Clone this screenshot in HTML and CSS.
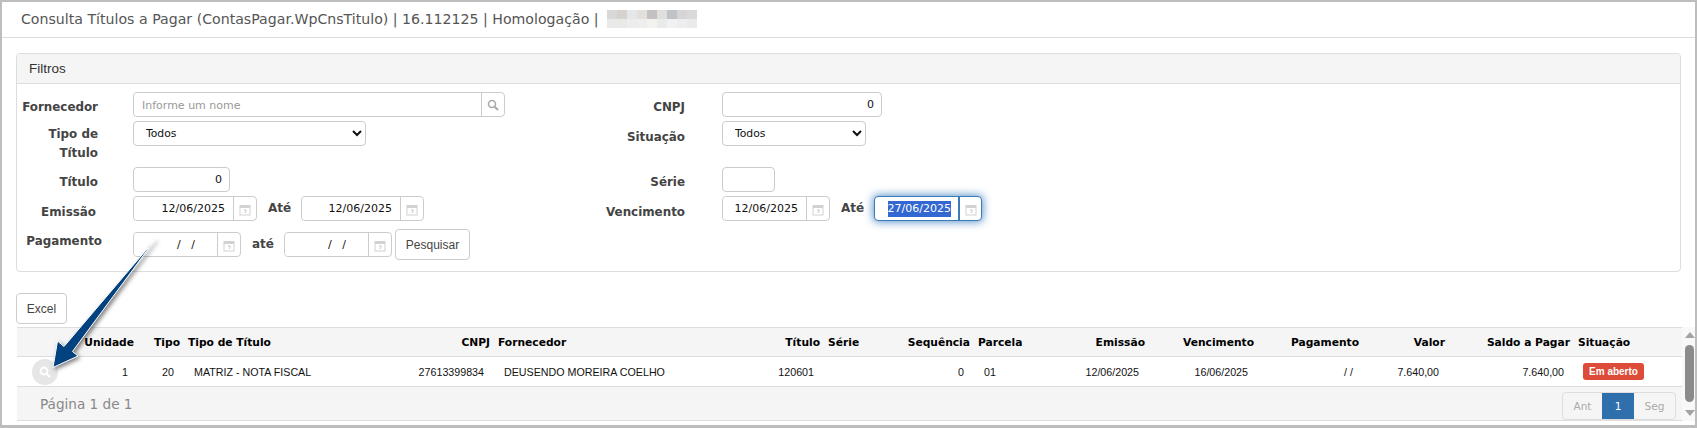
FILE: index.html
```html
<!DOCTYPE html>
<html lang="pt-BR">
<head>
<meta charset="utf-8">
<title>Consulta Títulos a Pagar</title>
<link rel="stylesheet" href="styles.css">
</head>
<body>
<div class="frame">
  <header class="page-title">
    <span>Consulta Títulos a Pagar (ContasPagar.WpCnsTitulo) | 16.112125 | Homologação |</span>
    <div class="blur">
      <i class="b1"></i><i class="b2"></i><i class="b3"></i><i class="b4"></i><i class="b5"></i><i class="b6"></i><i class="b7"></i><i class="b8"></i><i class="b9"></i>
      <i class="c1"></i><i class="c2"></i><i class="c3"></i><i class="c4"></i><i class="c5"></i><i class="c6"></i><i class="c7"></i><i class="c8"></i><i class="c9"></i>
    </div>
  </header>

  <section class="panel">
    <div class="panel-head">Filtros</div>
    <div class="form">
      <div class="field left">
        <label class="lbl">Fornecedor</label>
        <div class="group w-372">
          <input class="in grow ph" placeholder="Informe um nome">
          <span class="addon"><svg width="12" height="12" viewBox="0 0 12 12"><circle cx="5" cy="5" r="3.5" fill="none" stroke="#aaa" stroke-width="1.6"/><path d="M7.7 7.7 11 11" stroke="#aaa" stroke-width="2"/></svg></span>
        </div>
      </div>
      <div class="field right">
        <label class="lbl">CNPJ</label>
        <input class="in solo num w-160" value="0">
      </div>

      <div class="field left">
        <label class="lbl lbl-two">Tipo de<br>Título</label>
        <select class="sel w-233"><option>Todos</option></select>
      </div>
      <div class="field right">
        <label class="lbl l8">Situação</label>
        <select class="sel w-144"><option>Todos</option></select>
      </div>

      <div class="field left">
        <label class="lbl">Título</label>
        <input class="in solo num w-97" value="0">
      </div>
      <div class="field right">
        <label class="lbl">Série</label>
        <input class="in solo w-53">
      </div>

      <div class="field left">
        <label class="lbl l8 end2">Emissão</label>
        <div class="group w-124"><input class="in grow num" value="12/06/2025"><span class="addon"><svg class="cal" viewBox="0 0 12 12"><use href="#cal"/></svg></span></div>
        <span class="ate ate-a">Até</span>
        <div class="group w-123"><input class="in grow num" value="12/06/2025"><span class="addon"><svg class="cal" viewBox="0 0 12 12"><use href="#cal"/></svg></span></div>
      </div>
      <div class="field right">
        <label class="lbl l8">Vencimento</label>
        <div class="group w-108"><input class="in grow num" value="12/06/2025"><span class="addon"><svg class="cal" viewBox="0 0 12 12"><use href="#cal"/></svg></span></div>
        <span class="ate ate-b">Até</span>
        <div class="group w-108 focus"><span class="selected-wrap"><span class="selected">27/06/2025</span></span><span class="addon"><svg class="cal" viewBox="0 0 12 12"><use href="#cal"/></svg></span></div>
      </div>

      <div class="field left center">
        <label class="lbl l-pag">Pagamento</label>
        <div class="group w-108"><input class="in grow slash" value="/   /"><span class="addon"><svg class="cal" viewBox="0 0 12 12"><use href="#cal"/></svg></span></div>
        <span class="ate ate-c">até</span>
        <div class="group w-108"><input class="in grow slash" value="/   /"><span class="addon"><svg class="cal" viewBox="0 0 12 12"><use href="#cal"/></svg></span></div>
        <button class="btn btn-search">Pesquisar</button>
      </div>
    </div>
  </section>

  <section class="results">
    <button class="btn btn-excel">Excel</button>
    <div class="grid-wrap">
      <div class="grid-main">
        <table class="grid">
          <colgroup>
            <col class="c-a"><col class="c-b"><col class="c-c"><col class="c-d"><col class="c-e"><col class="c-f"><col class="c-g"><col class="c-h"><col class="c-i"><col class="c-j"><col class="c-k"><col class="c-l"><col class="c-m"><col class="c-n"><col class="c-o"><col class="c-p">
          </colgroup>
          <thead>
            <tr>
              <th></th><th class="r">Unidade</th><th class="r">Tipo</th><th>Tipo de Título</th><th class="r">CNPJ</th><th>Fornecedor</th><th class="r">Título</th><th>Série</th><th class="r">Sequência</th><th>Parcela</th><th class="r">Emissão</th><th class="r">Vencimento</th><th class="r">Pagamento</th><th class="r">Valor</th><th class="r">Saldo a Pagar</th><th>Situação</th>
            </tr>
          </thead>
          <tbody>
            <tr>
              <td class="act"><span class="circle"><svg width="12" height="12" viewBox="0 0 12 12"><circle cx="5" cy="5" r="3.5" fill="none" stroke="#fff" stroke-width="1.8"/><path d="M7.7 7.7 11 11" stroke="#fff" stroke-width="2.2"/></svg></span></td>
              <td class="r">1</td><td class="r">20</td><td>MATRIZ - NOTA FISCAL</td><td class="r">27613399834</td><td>DEUSENDO MOREIRA COELHO</td><td class="r">120601</td><td></td><td class="r">0</td><td>01</td><td class="r">12/06/2025</td><td class="r">16/06/2025</td><td class="r">/ /</td><td class="r">7.640,00</td><td class="r">7.640,00</td><td class="sit"><span class="badge">Em aberto</span></td>
            </tr>
          </tbody>
        </table>
        <div class="grid-foot">
          <span class="pageinfo">Página 1 de 1</span>
          <div class="pager"><span class="pg p-ant">Ant</span><span class="pg p-cur">1</span><span class="pg p-seg">Seg</span></div>
        </div>
      </div>
      <div class="scroll">
        <svg class="sc-arrow" width="10" height="6" viewBox="0 0 10 6"><path d="M5 0 10 6H0z" fill="#a3a3a3"/></svg>
        <div class="thumb"></div>
        <svg class="sc-arrow" width="10" height="6" viewBox="0 0 10 6"><path d="M0 0H10L5 6z" fill="#a3a3a3"/></svg>
      </div>
    </div>
  </section>
</div>

<svg class="defs" width="0" height="0"><defs>
  <g id="cal"><rect x="1" y="1.5" width="10" height="9.5" fill="#fff" stroke="#d2d2d2"/><rect x="1" y="1.5" width="10" height="2.5" fill="#d2d2d2"/><path d="M5 6h2v1.5L6 9" fill="none" stroke="#c4c4c4"/></g>
</defs></svg>

<svg class="arrow" width="1697" height="428" viewBox="0 0 1697 428">
  <polygon points="155.5,239 72.5,351.5 78,356 53,367.5 57.5,341 64,346.5" fill="#02427f" stroke="#fff" stroke-width="1"/>
</svg>
</body>
</html>
```

FILE: styles.css
```css
* { box-sizing: border-box; }
html, body { margin: 0; padding: 0; }
body { position: relative; width: 1697px; height: 428px; overflow: hidden; background: #fff; font-family: "DejaVu Sans", Verdana, sans-serif; color: #444; }

.frame { width: 1697px; height: 428px; border: 2px solid #bdbdbd; border-bottom-width: 3px; overflow: hidden; }

.page-title { height: 36px; border-bottom: 1px solid #ddd; padding-left: 19px; display: flex; align-items: center; gap: 8px; font-size: 14.15px; color: #555; padding-bottom: 1px; }
.blur { display: grid; grid-template-columns: repeat(9, 10px); grid-template-rows: 9px 9px; }
.b1 { background: #d8d8d8; } .b2 { background: #d5d2d0; } .b3 { background: #e4e6ea; } .b4 { background: #e2dfdc; } .b5 { background: #c3c0c2; } .b6 { background: #dfdfdd; } .b7 { background: #bfc3c8; } .b8 { background: #d5d5d8; } .b9 { background: #d9d9d7; }
.c1 { background: #e9e9e9; } .c2 { background: #e9e9e8; } .c3 { background: #ededee; } .c4 { background: #edefee; } .c5 { background: #f3f2ef; } .c6 { background: #e9eaea; } .c7 { background: #f0f1f3; } .c8 { background: #eeeeef; } .c9 { background: #eaeaea; }

.panel { margin: 15px 14px 0; height: 219px; border: 1px solid #ddd; border-radius: 4px; }
.panel-head { height: 30px; padding-left: 12px; background: #f5f5f5; border-bottom: 1px solid #ddd; border-radius: 4px 4px 0 0; font: 13.5px/29px "Liberation Sans", Arial, sans-serif; color: #333; }

.form { display: grid; grid-template-columns: 560px 1fr; grid-template-rows: 25px 42px 25px 25px 31px; row-gap: 4px; padding-top: 8px; }
.form > .field:nth-child(9) { grid-column: 1 / -1; margin-top: 4px; }
.field { display: flex; align-items: flex-start; }
.field.center { align-items: center; height: 31px; }
.field.left .lbl { width: 81px; margin-right: 35px; }
.field.right .lbl { width: 108px; margin-right: 37px; }
.lbl { font-size: 11.9px; font-weight: 700; line-height: 16px; text-align: right; padding-top: 7px; color: #444; flex: none; }
.lbl-two { line-height: 19px; padding-top: 4px; }
.l8 { padding-top: 8px; }
.end2 { padding-right: 2px; }
.field.left .l-pag { padding: 0 0 8px; width: 85px; margin-right: 31px; white-space: nowrap; }

.in { height: 25px; border: 0; outline: 0; background: #fff; font: 11px "DejaVu Sans", Verdana, sans-serif; color: #111; padding: 0 8px; min-width: 0; border-radius: 4px; }
.in::placeholder { color: #999; }
.solo { border: 1px solid #ccc; }
.num { text-align: right; }
.grow { flex: 1; height: 23px; }
.ph { padding-top: 1px; }
.slash { text-align: right; padding-right: 22px; }
.solo.num { padding-right: 7px; }

.group { display: flex; height: 25px; border: 1px solid #ccc; border-radius: 4px; background: #fff; flex: none; }
.addon { width: 23px; flex: none; border-left: 1px solid #ccc; display: flex; align-items: center; justify-content: center; }
.cal { width: 12px; height: 12px; margin-top: 2px; }

.w-372 { width: 372px; }
.w-160 { width: 160px; }
.w-233 { width: 233px; }
.w-144 { width: 144px; }
.w-97 { width: 97px; }
.w-53 { width: 53px; }
.w-124 { width: 124px; }
.w-123 { width: 123px; }
.w-108 { width: 108px; }

.sel { height: 25px; border: 1px solid #ccc; border-radius: 4px; background: #fff; font: 10.8px "DejaVu Sans", Verdana, sans-serif; color: #111; padding: 0 8px; flex: none; }

.ate { font-size: 12px; font-weight: 700; color: #444; line-height: 25px; flex: none; }
.ate-a { margin: 0 10px 0 11px; width: 23px; }
.ate-b { margin: 0 10px 0 11px; width: 23px; }
.ate-c { margin: 0 11px 0 11px; width: 21px; }

.focus { border-color: #3c7ab7; box-shadow: 0 0 8px 1px rgba(50, 120, 190, .8); }
.focus .addon { border-left: 2px solid #3c7ab7; }
.selected-wrap { flex: 1; display: flex; align-items: center; justify-content: flex-end; padding-right: 7px; font-size: 11px; color: #111; }
.selected { background: #3367d1; color: #fff; line-height: 16px; }

.btn { background: #fff; border: 1px solid #ccc; border-radius: 4px; font: 12px "Liberation Sans", Arial, sans-serif; color: #444; padding: 0; flex: none; }
.btn-search { width: 75px; height: 31px; margin-left: 3px; }
.btn-excel { display: block; width: 51px; height: 31px; margin-left: 14px; }

.results { margin-top: 21px; }
.grid-wrap { display: flex; margin-top: 3px; padding-left: 15px; }
.grid-main { width: 1665px; flex: none; }
.grid { width: 1665px; table-layout: fixed; border-collapse: collapse; font: 10.7px "Liberation Sans", Arial, sans-serif; color: #111; }
.c-a { width: 56px; } .c-b { width: 65px; } .c-c { width: 46px; } .c-d { width: 216px; } .c-e { width: 94px; }
.c-f { width: 229px; } .c-g { width: 101px; } .c-h { width: 76px; } .c-i { width: 74px; } .c-j { width: 86px; }
.c-k { width: 89px; } .c-l { width: 109px; } .c-m { width: 105px; } .c-n { width: 86px; } .c-o { width: 125px; } .c-p { width: 108px; }
.grid th { height: 29px; background: #f5f5f5; border-top: 1px solid #ddd; border-bottom: 1px solid #ddd; padding: 0 4px; text-align: left; font: 700 10.7px "DejaVu Sans", Verdana, sans-serif; color: #000; white-space: nowrap; }
.grid td { height: 30px; padding: 0 10px; border-bottom: 1px solid #ddd; white-space: nowrap; }
.grid th.r, .grid td.r { text-align: right; }
.grid td.act { padding: 0 0 0 15px; }
.grid td.sit { padding-left: 9px; }
.circle { display: flex; width: 26px; height: 26px; border-radius: 50%; background: #e6e6e6; align-items: center; justify-content: center; }
.badge { display: inline-block; width: 61px; height: 17px; line-height: 17px; text-align: center; background: #dd4b39; color: #fff; font-weight: 700; font-size: 10px; border-radius: 3px; }

.grid-foot { height: 34px; background: #f5f5f5; border-bottom: 1px solid #ddd; display: flex; justify-content: space-between; align-items: flex-end; padding: 0 6px 0 23px; }
.pageinfo { font-size: 13.6px; color: #888; align-self: center; }
.pager { display: flex; height: 28px; border: 1px solid #ddd; border-radius: 4px; font-size: 10.5px; color: #aaa; }
.pg { display: flex; align-items: center; justify-content: center; }
.p-ant { width: 39px; } .p-cur { width: 32px; background: #2f6fab; color: #fff; } .p-seg { width: 41px; }

.scroll { width: 13px; height: 94px; background: #f8f8f8; display: flex; flex-direction: column; align-items: center; padding: 5px 0 0 2px; }
.sc-arrow { flex: none; }
.thumb { width: 9px; height: 57px; margin: 7px 0 8px; border-radius: 5px; background: #8b8b8b; }

.defs { position: absolute; }
.arrow { position: absolute; left: 0; top: 0; pointer-events: none; filter: drop-shadow(2px 2px 2px rgba(0, 0, 0, .5)); }
```
